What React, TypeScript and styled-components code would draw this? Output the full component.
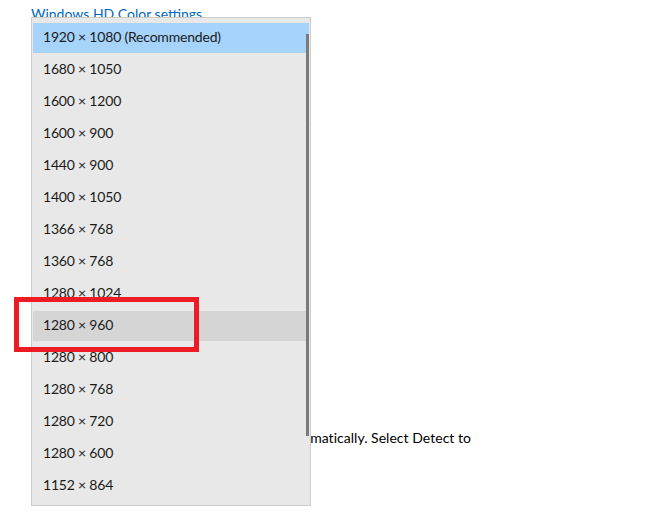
import React from 'react';
import styled, { createGlobalStyle } from 'styled-components';

const GlobalStyle = createGlobalStyle`
	html, body {
		margin: 0;
		padding: 0;
		background: #ffffff;
	}
	body {
		font-family: Lato, 'Noto Sans', sans-serif;
		color: #000000;
	}
`;

const resolutions = [
	'1920 × 1080 (Recommended)',
	'1680 × 1050',
	'1600 × 1200',
	'1600 × 900',
	'1440 × 900',
	'1400 × 1050',
	'1366 × 768',
	'1360 × 768',
	'1280 × 1024',
	'1280 × 960',
	'1280 × 800',
	'1280 × 768',
	'1280 × 720',
	'1280 × 600',
	'1152 × 864',
];

export default () => {
	const selected = 0;
	const hovered = 9;

	return (
		<Page>
			<GlobalStyle />
			<Settings>
				<SettingsLink>Windows HD Color settings</SettingsLink>
				<Spacer h={86} />
				<SettingsText>Change the size of text, apps, and other items</SettingsText>
				<Spacer h={298} />
				<SettingsText>
					Older displays might not always connect automatically. Select Detect to
				</SettingsText>
			</Settings>

			<Dropdown>
				{resolutions.map((r, i) => (
					<Item key={r} state={i === selected ? 'selected' : i === hovered ? 'hover' : 'none'}>
						{r}
					</Item>
				))}
				<Thumb />
			</Dropdown>

			<Annotation />
		</Page>
	);
};

const Page = styled.div`
	position: relative;
	width: 650px;
	height: 520px;
	overflow: hidden;
	background: #ffffff;
`;

const Settings = styled.div`
	display: flex;
	flex-direction: column;
	padding: 4px 0 0 31px;
	font-size: 14px;
	line-height: 20px;
`;

const Spacer = styled.div<{ h: number }>`
	height: ${({ h }) => h}px;
`;

const SettingsLink = styled.span`
	color: #0067c0;
`;

const SettingsText = styled.span`
	color: #000000;
	white-space: nowrap;
	letter-spacing: 0.03px;
`;

const Dropdown = styled.ul`
	position: absolute;
	left: 31px;
	top: 17px;
	width: 276px;
	margin: 0;
	padding: 5px 1px 4px;
	list-style: none;
	background: #e8e8e8;
	border: 1px solid #cccccc;
	display: flex;
	flex-direction: column;
	gap: 2px;
`;

const Item = styled.li<{ state: 'selected' | 'hover' | 'none' }>`
	height: 30px;
	display: flex;
	align-items: center;
	padding: 0 0 4px 10px;
	box-sizing: border-box;
	font-size: 14px;
	letter-spacing: -0.2px;
	color: #1a1a1a;
	background: ${({ state }) =>
		state === 'selected' ? '#a6d3fa' : state === 'hover' ? '#d5d5d5' : 'transparent'};
`;

const Thumb = styled.div`
	position: absolute;
	left: 274px;
	top: 16px;
	width: 3px;
	height: 402px;
	background: #7a7a7a;
`;

const Annotation = styled.div`
	position: absolute;
	left: 14px;
	top: 297px;
	width: 185px;
	height: 55px;
	box-sizing: border-box;
	border: 5px solid #ed1c24;
`;
